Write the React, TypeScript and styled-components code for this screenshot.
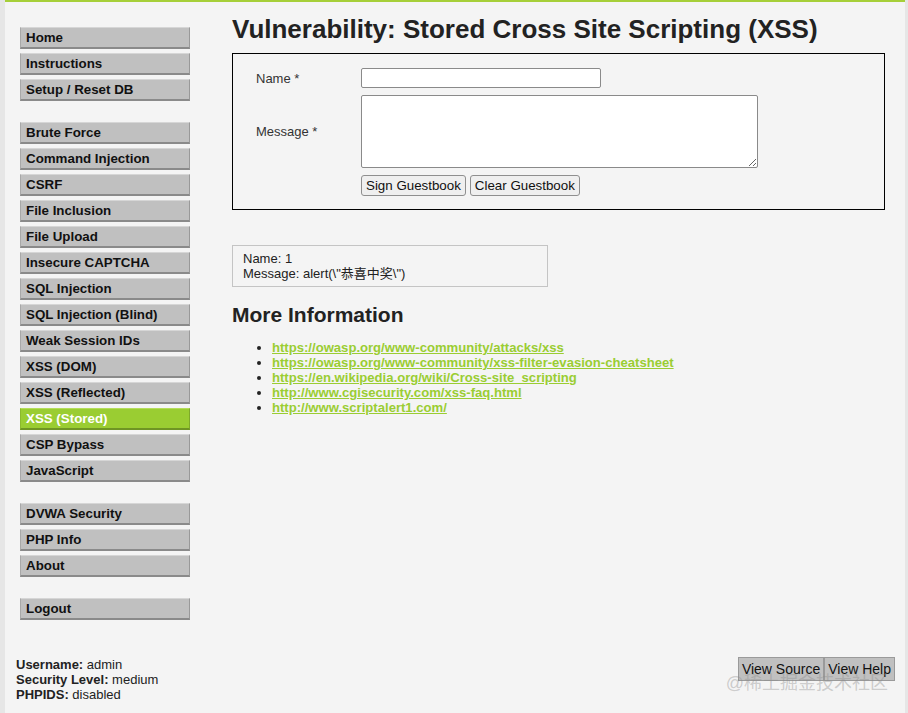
import React from "react";
import styled, { createGlobalStyle } from "styled-components";

const GlobalStyle = createGlobalStyle`
  html, body {
    margin: 0;
    padding: 0;
    background: #e6e6e6;
    font-family: "Liberation Sans", Arial, "Noto Sans CJK SC", sans-serif;
    color: #222;
  }
`;

const Container = styled.div`
  position: relative;
  width: 900px;
  min-height: 713px;
  box-sizing: border-box;
  margin: 0 0 0 5px;
  background: #f4f4f4;
  border-top: 2px solid #a6cf39;
  display: flex;
  flex-direction: column;
`;

const TopRow = styled.div`
  display: flex;
`;

const Sidebar = styled.div`
  width: 227px;
  flex-shrink: 0;
  box-sizing: border-box;
  padding: 25px 0 0 15px;
  display: flex;
  flex-direction: column;
  gap: 21px;
`;

const MenuGroup = styled.ul`
  list-style: none;
  margin: 0;
  padding: 0;
  width: 170px;
  display: flex;
  flex-direction: column;
  gap: 4px;
`;

const MenuItem = styled.li<{ $selected?: boolean }>`
  height: 22px;
  box-sizing: border-box;
  padding-left: 5px;
  display: flex;
  align-items: center;
  font-size: 13.33px;
  font-weight: bold;
  background: ${(p) => (p.$selected ? "#9acd32" : "#c0c0c0")};
  color: ${(p) => (p.$selected ? "#fff" : "#111")};
  border-top: 1px solid ${(p) => (p.$selected ? "#b5dc5a" : "#d6d6d6")};
  border-left: 1px solid ${(p) => (p.$selected ? "#8bb92d" : "#a8a8a8")};
  border-right: 1px solid ${(p) => (p.$selected ? "#7ea82a" : "#999")};
  border-bottom: 2px solid ${(p) => (p.$selected ? "#6f9524" : "#8a8a8a")};
`;

const Main = styled.div`
  flex: 1;
  padding: 12px 20px 0 0;
`;

const Title = styled.h1`
  margin: 0 0 9px;
  font-size: 26px;
  line-height: 30px;
  font-weight: bold;
  color: #222;
`;

const FormBox = styled.div`
  border: 1px solid #000;
  padding: 14px 20px 13px 23px;
`;

const FormGrid = styled.div`
  display: grid;
  grid-template-columns: 105px 1fr;
  row-gap: 7px;
  align-items: center;
`;

const Label = styled.label`
  font-size: 13px;
  color: #333;
`;

const NameInput = styled.input`
  width: 240px;
  height: 20px;
  box-sizing: border-box;
  border: 1px solid #8a8a8a;
  border-radius: 2px;
  background: #fff;
`;

const MessageArea = styled.textarea`
  width: 397px;
  height: 73px;
  box-sizing: border-box;
  border: 1px solid #8a8a8a;
  border-radius: 2px;
  background: #fff;
  display: block;
`;

const ButtonRow = styled.div`
  grid-column: 2;
  display: flex;
  gap: 4px;
`;

const FormButton = styled.button`
  height: 21px;
  padding: 0 4px;
  font-family: "Liberation Sans", Arial, sans-serif;
  font-size: 13.33px;
  color: #111;
  background: #efefef;
  border: 1px solid #8f8f8f;
  border-radius: 3px;
`;

const Entry = styled.div`
  margin-top: 35px;
  width: 316px;
  box-sizing: border-box;
  border: 1px solid #c4c4c4;
  padding: 5px 10px;
  font-size: 13px;
  line-height: 15px;
  color: #222;
`;

const SubTitle = styled.h2`
  margin: 16px 0 13px;
  font-size: 21px;
  line-height: 24px;
  font-weight: bold;
  color: #222;
`;

const LinkList = styled.ul`
  margin: 0;
  padding-left: 40px;
  font-size: 13.1px;
  line-height: 15px;
`;

const Link = styled.a`
  color: #9acd32;
  font-weight: bold;
  text-decoration: underline;
`;

const Footer = styled.div`
  margin-top: auto;
  display: flex;
  justify-content: space-between;
  align-items: flex-start;
  padding: 0 10px 11px 11px;
`;

const Info = styled.div`
  font-size: 13px;
  line-height: 15px;
  color: #222;
`;

const ViewButtons = styled.div`
  display: flex;
`;

const ViewButton = styled.button`
  height: 24px;
  padding: 0 3px;
  font-family: "Liberation Sans", Arial, sans-serif;
  font-size: 14px;
  color: #111;
  background: #c0c0c0;
  border: 1px solid #9a9a9a;
  border-radius: 0;
`;

const Watermark = styled.div`
  position: absolute;
  right: 17px;
  bottom: 19px;
  font-family: "Liberation Sans", "Noto Sans CJK SC", sans-serif;
  font-size: 18px;
  color: rgba(140, 140, 140, 0.4);
  pointer-events: none;
`;

const menu = [
  ["Home", "Instructions", "Setup / Reset DB"],
  [
    "Brute Force",
    "Command Injection",
    "CSRF",
    "File Inclusion",
    "File Upload",
    "Insecure CAPTCHA",
    "SQL Injection",
    "SQL Injection (Blind)",
    "Weak Session IDs",
    "XSS (DOM)",
    "XSS (Reflected)",
    "XSS (Stored)",
    "CSP Bypass",
    "JavaScript",
  ],
  ["DVWA Security", "PHP Info", "About"],
  ["Logout"],
];

const links = [
  "https://owasp.org/www-community/attacks/xss",
  "https://owasp.org/www-community/xss-filter-evasion-cheatsheet",
  "https://en.wikipedia.org/wiki/Cross-site_scripting",
  "http://www.cgisecurity.com/xss-faq.html",
  "http://www.scriptalert1.com/",
];

export default function App() {
  return (
    <>
      <GlobalStyle />
      <Container>
        <TopRow>
          <Sidebar>
            {menu.map((group, i) => (
              <MenuGroup key={i}>
                {group.map((item) => (
                  <MenuItem key={item} $selected={item === "XSS (Stored)"}>
                    {item}
                  </MenuItem>
                ))}
              </MenuGroup>
            ))}
          </Sidebar>
          <Main>
            <Title>Vulnerability: Stored Cross Site Scripting (XSS)</Title>
            <FormBox>
              <FormGrid>
                <Label>Name *</Label>
                <div>
                  <NameInput type="text" />
                </div>
                <Label>Message *</Label>
                <div>
                  <MessageArea />
                </div>
                <ButtonRow>
                  <FormButton>Sign Guestbook</FormButton>
                  <FormButton>Clear Guestbook</FormButton>
                </ButtonRow>
              </FormGrid>
            </FormBox>
            <Entry>
              Name: 1
              <br />
              Message: alert(\"恭喜中奖\")
            </Entry>
            <SubTitle>More Information</SubTitle>
            <LinkList>
              {links.map((l) => (
                <li key={l}>
                  <Link href="#">{l}</Link>
                </li>
              ))}
            </LinkList>
          </Main>
        </TopRow>
        <Footer>
          <Info>
            <b>Username:</b> admin
            <br />
            <b>Security Level:</b> medium
            <br />
            <b>PHPIDS:</b> disabled
          </Info>
          <ViewButtons>
            <ViewButton>View Source</ViewButton>
            <ViewButton>View Help</ViewButton>
          </ViewButtons>
        </Footer>
        <Watermark>@稀土掘金技术社区</Watermark>
      </Container>
    </>
  );
}
